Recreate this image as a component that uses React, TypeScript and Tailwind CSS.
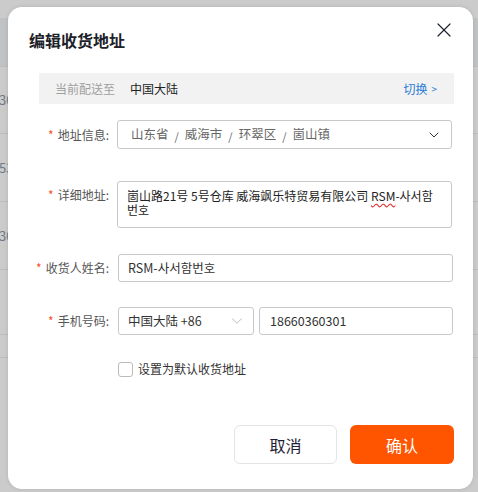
import { X, ChevronDown } from "lucide-react";

const ROWS = [
  { h: "h-[67px]", txt: "30" },
  { h: "h-[68px]", txt: "53" },
  { h: "h-[68px]", txt: "30" },
  { h: "h-[65px]", txt: "" },
  { h: "h-[23px]", txt: "" },
];

const REGION = ["山东省", "威海市", "环翠区", "崮山镇"];

function Label({ text }: { text: string }) {
  return (
    <div className="w-[101px] shrink-0 pr-0 text-right text-[12px] leading-[28px] text-[#555]">
      <span className="mr-[4px] text-[#f5512b]">*</span>
      {text}:
    </div>
  );
}

export default function App() {
  return (
    <div className="relative h-[492px] w-[478px] overflow-hidden bg-[#cbcbcb] font-['Noto_Sans_CJK_SC','Noto_Sans',sans-serif]">
      {/* page behind the overlay */}
      <div className="h-[18px] bg-[#cbcbcb]" />
      <div className="h-[49px] border-b border-[#bdbdbd] bg-[#c1c2c3]" />
      {ROWS.map((r, i) => (
        <div key={i} className={`${r.h} flex items-center border-b border-[#bdbdbd]`}>
          <span className="-ml-[1px] text-[13px] text-[#6d7a87]">{r.txt}</span>
        </div>
      ))}

      {/* dialog */}
      <div className="absolute left-[8px] top-[7px] flex h-[482px] w-[465px] flex-col rounded-[14px] bg-white shadow-[0_0_4px_rgba(0,0,0,0.12)]">
        <div className="flex items-start justify-between pl-[21px] pr-[17px] pt-[21px]">
          <h2 className="text-[16px] font-bold leading-[24px] text-[#1d2129]">编辑收货地址</h2>
          <button className="mt-[-10px] text-[#1f2333]" aria-label="close">
            <X className="h-[24px] w-[24px]" strokeWidth={1.2} />
          </button>
        </div>

        <div className="ml-[31px] mt-[21px] flex h-[31px] w-[415px] items-center bg-[#f2f2f2] pl-[16px] pr-[17px] text-[12px]">
          <span className="text-[#a0a0a0]">当前配送至</span>
          <span className="ml-[15px] text-[#222]">中国大陆</span>
          <span className="ml-auto flex items-center text-[#2b7bd6]">
            切换<span className="ml-[4px] text-[10px]">&gt;</span>
          </span>
        </div>

        <div className="mt-[16px] flex items-center">
          <Label text="地址信息" />
          <div className="ml-[8px] flex h-[29px] w-[335px] items-center rounded-[3px] border border-[#c9c9c9] pl-[13px] pr-[9px] text-[12.5px] text-[#666]">
            {REGION.map((r, i) => (
              <span key={r} className="flex items-center">
                {i > 0 && <span className="mx-[6px] mt-[3px] text-[11px]">/</span>}
                {r}
              </span>
            ))}
            <ChevronDown className="ml-auto h-[16px] w-[16px] text-[#333]" strokeWidth={1.5} />
          </div>
        </div>

        <div className="mt-[32px] flex items-start">
          <Label text="详细地址" />
          <div className="ml-[8px] h-[47px] w-[335px] rounded-[3px] border border-[#c9c9c9] pl-[9px] pr-[8px] pt-[7px] text-[12px] leading-[14px] text-[#222]">
            <div className="whitespace-nowrap">
              崮山路21号 5号仓库 威海飒乐特贸易有限公司{" "}
              <span className="underline decoration-[#e53935] decoration-wavy underline-offset-[2px]">RSM</span>
              -사서함
            </div>
            <div>번호</div>
          </div>
        </div>

        <div className="mt-[26px] flex items-center">
          <Label text="收货人姓名" />
          <div className="ml-[9px] flex h-[28px] w-[335px] items-center rounded-[3px] border border-[#c9c9c9] pl-[9px] text-[12.5px] text-[#333]">
            RSM-사서함번호
          </div>
        </div>

        <div className="mt-[25px] flex items-center">
          <Label text="手机号码" />
          <div className="ml-[9px] flex h-[28px] w-[136px] items-center rounded-[3px] border border-[#c9c9c9] pl-[9px] pr-[7px] text-[12.5px] text-[#333]">
            中国大陆 +86
            <ChevronDown className="ml-auto h-[18px] w-[18px] text-[#b5b5b5]" strokeWidth={1.2} />
          </div>
          <div className="ml-[5px] flex h-[28px] w-[194px] items-center rounded-[3px] border border-[#c9c9c9] pl-[10px] text-[12.5px] text-[#333]">
            18660360301
          </div>
        </div>

        <label className="ml-[110px] mt-[25px] flex items-center gap-[5px] text-[12px] text-[#333]">
          <span className="h-[15px] w-[15px] rounded-[3px] border border-[#bbb] bg-white" />
          设置为默认收货地址
        </label>

        <div className="mt-auto flex justify-end gap-[13px] pb-[25px] pr-[19px]">
          <button className="h-[39px] w-[103px] rounded-[6px] border border-[#e3e4e8] text-[16px] text-[#1d2133]">
            取消
          </button>
          <button className="h-[39px] w-[104px] rounded-[6px] bg-[#ff5500] text-[16px] text-white">
            确认
          </button>
        </div>
      </div>
    </div>
  );
}
